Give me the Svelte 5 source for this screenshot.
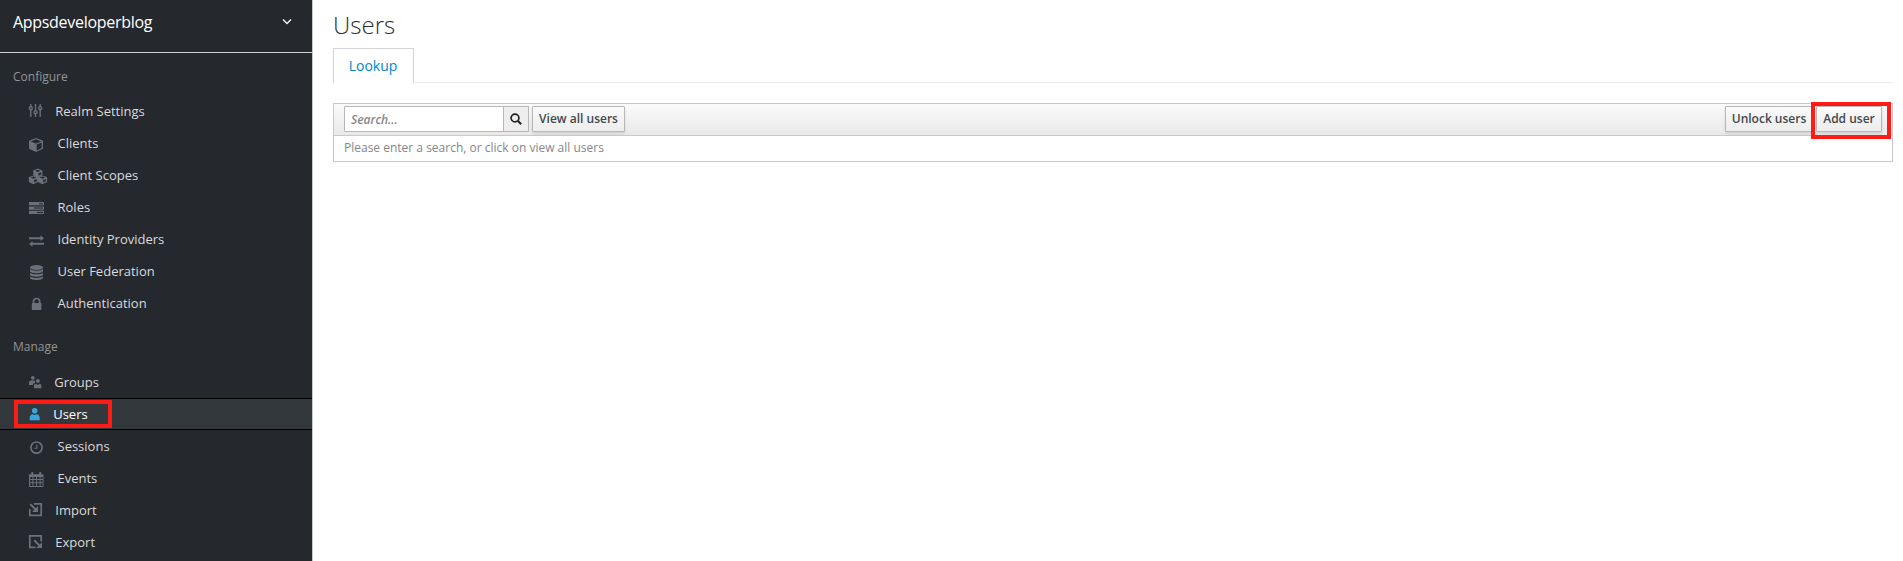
<script>
  const configure = [
    { label: 'Realm Settings', icon: 'sliders', offset: 55.3 },
    { label: 'Clients', icon: 'cube', offset: 57.5 },
    { label: 'Client Scopes', icon: 'cubes', offset: 57.5 },
    { label: 'Roles', icon: 'tasks', offset: 57.5 },
    { label: 'Identity Providers', icon: 'exchange', offset: 57.5 },
    { label: 'User Federation', icon: 'database', offset: 57.5 },
    { label: 'Authentication', icon: 'lock', offset: 57.5 }
  ];
  const manage = [
    { label: 'Groups', icon: 'groups', offset: 54.2 },
    { label: 'Users', icon: 'user', offset: 53.2, active: true },
    { label: 'Sessions', icon: 'clock', offset: 57.5 },
    { label: 'Events', icon: 'calendar', offset: 57.5 },
    { label: 'Import', icon: 'import', offset: 55.3 },
    { label: 'Export', icon: 'export', offset: 55.3 }
  ];
</script>

{#snippet glyph(name)}
  <svg class="icon" width="20" height="20" viewBox="0 0 20 20" fill="currentColor" aria-hidden="true">
    {#if name === 'sliders'}
      <g fill="none" stroke="currentColor" stroke-width="1.4">
        <path d="M2.8 3v2.7M2.8 9v7M7.5 3v6.5M7.5 13v3M12.2 3v2.7M12.2 9v7" />
        <circle cx="2.8" cy="7.3" r="1.5" /><circle cx="7.5" cy="11.2" r="1.5" /><circle cx="12.2" cy="7.3" r="1.5" />
      </g>
    {:else if name === 'cube'}
      <path fill-rule="evenodd" d="M8 5l7 2.7v8L8 19l-7-3.3v-8zM8 6.3L2.8 8.4 8 10.4l5.2-2zM8.7 11.6v5.8l5-2.4V9.6z" />
    {:else if name === 'cubes'}
      {#each [[5.2, 3.6], [0.8, 10.4], [9.9, 10.4]] as [x, y]}
        <path transform="translate({x} {y})" fill-rule="evenodd" d="M4.6 0L9.2 1.9v4.8L4.6 8.9 0 6.7V1.9zM4.6 1.1L2 2.2 4.6 3.3 7.2 2.2zM5.3 4.7v2.4l2.6-1.2V3.6z" />
      {/each}
    {:else if name === 'tasks'}
      <path fill-rule="evenodd" d="M1 5h15v3.3H1zM11 6.2v1h4v-1zM1 9.4h15v3.3H1zM6 10.5v1h9v-1zM1 13.8h15v3.3H1zM9 14.9v1h6v-1z" />
    {:else if name === 'exchange'}
      <path d="M1 8.2h11.5V6.3L16 9.2l-3.5 2.7v-1.7H1zM16 13.8H4.5v-1.7L1 14.9l3.5 2.8v-1.9H16z" />
    {:else if name === 'database'}
      <ellipse cx="8.5" cy="6.5" rx="6.5" ry="2.4" />
      <path d="M2 8.1c2 2.2 11 2.2 13 0v1.8c0 3-13 3-13 0zM2 11.7c2 2.2 11 2.2 13 0v1.8c0 3-13 3-13 0zM2 15.3c2 2.2 11 2.2 13 0v1.4c0 3-13 3-13 0z" />
    {:else if name === 'lock'}
      <path d="M5.5 10.5V8.6a3.1 3.1 0 0 1 6.2 0v1.9" fill="none" stroke="currentColor" stroke-width="1.7" />
      <rect x="3.8" y="10" width="9.6" height="7" rx=".7" />
    {:else if name === 'groups'}
      <circle cx="4.8" cy="5.8" r="1.9" /><circle cx="9.9" cy="8.9" r="1.9" />
      <path d="M1 13V10.5Q1 8.8 3 8.6h3.5l1 1.4-.8 1.3H5.4L4.9 13zM5.9 16.2v-2.1q0-2.2 2-2.4l2 1.2 2-1.2q1.5.2 1.5 2.4v2.1z" />
    {:else if name === 'user'}
      <circle cx="6.7" cy="6.7" r="2.8" />
      <path d="M1.7 16.2v-2.1c0-2.5 1.3-3.5 3.1-3.8q1.9 1 3.8 0c1.8.3 3.1 1.3 3.1 3.8v2.1z" />
    {:else if name === 'clock'}
      <circle cx="8.5" cy="11.6" r="5.6" fill="none" stroke="currentColor" stroke-width="1.7" />
      <path d="M8.9 8.6v3.6H6.4" fill="none" stroke="currentColor" stroke-width="1.1" />
    {:else if name === 'calendar'}
      <path fill-rule="evenodd" d="M1 6.2h2.2V5q0-1 1.1-1t1.1 1v1.2h5.7V5q0-1 1.1-1t1.1 1v1.2h2.2V19H1zM2.2 9v2.1h2.2V9zM5.4 9v2.1h2.6V9zM9 9v2.1h2.6V9zM12.6 9v2.1h2V9zM2.2 12.1v2.2h2.2v-2.2zM5.4 12.1v2.2h2.6v-2.2zM9 12.1v2.2h2.6v-2.2zM12.6 12.1v2.2h2v-2.2zM2.2 15.3V18h2.2v-2.7zM5.4 15.3V18h2.6v-2.7zM9 15.3V18h2.6v-2.7zM12.6 15.3V18h2v-2.7z" />
    {:else if name === 'import'}
      <path d="M6 3.9h7.2v11.4H1.8V9" fill="none" stroke="currentColor" stroke-width="1.7" />
      <path d="M2.3 4.3l5 5" stroke="currentColor" stroke-width="2" /><path d="M10 6v6H4z" />
    {:else if name === 'export'}
      <path d="M7.5 15.3H1.8V3.9h11.4v5.6" fill="none" stroke="currentColor" stroke-width="1.7" />
      <path d="M6.2 8.3l5 5" stroke="currentColor" stroke-width="2" /><path d="M14 10.2V16H8.2z" />
    {/if}
  </svg>
{/snippet}

{#snippet menu(items)}
  <ul>
    {#each items as item}
      <li class:active={item.active}>
        <span class="lead" style="width: {item.offset - 28}px">{@render glyph(item.icon)}</span>
        <span class="label">{item.label}</span>
        {#if item.active}<i class="mark mark-nav"></i>{/if}
      </li>
    {/each}
  </ul>
{/snippet}

<div class="page">
  <aside>
    <div class="realm">
      <span>Appsdeveloperblog</span>
      <svg width="12" height="8" viewBox="0 0 12 8" fill="none" stroke="#f0f0f0" stroke-width="1.5"><path d="M2 1.5l4 4 4-4" /></svg>
    </div>
    <h2>Configure</h2>
    {@render menu(configure)}
    <h2 class="second">Manage</h2>
    {@render menu(manage)}
  </aside>

  <main>
    <h1>Users</h1>
    <nav><span class="tab">Lookup</span></nav>
    <section class="table">
      <div class="toolbar">
        <div class="search">
          <input type="text" placeholder="Search..." />
          <span class="go">
            <svg width="12" height="12" viewBox="0 0 12 12" fill="none" stroke="#222" stroke-width="1.7"><circle cx="5" cy="5" r="3.9" /><path d="M7.8 7.8l3.4 3.4" stroke-width="2" /></svg>
          </span>
        </div>
        <button class="view">View all users</button>
        <div class="actions">
          <button class="unlock">Unlock users</button>
          <button class="add">Add user</button>
          <i class="mark mark-add"></i>
        </div>
      </div>
      <div class="message">Please enter a search, or click on view all users</div>
    </section>
  </main>
</div>

<style>
  :global(body) { margin: 0; background: #fff; }
  * { box-sizing: border-box; }
  .page { display: flex; height: 561px; overflow: hidden; font-family: 'Open Sans', sans-serif; font-size: 13px; }
  aside { width: 313px; flex: none; background: #25282d; border-right: 1px solid #c8c9ca; color: #dbdbdb; }
  .realm { display: flex; align-items: center; justify-content: space-between; height: 53px; padding: 0 19px 8px 13px; border-bottom: 1px solid #d3d3d4; font-size: 16px; letter-spacing: -0.3px; color: #fff; }
  h2 { margin: 0; height: 42px; padding: 14px 0 0 13px; font-size: 12px; line-height: 20px; font-weight: 400; color: #929497; }
  h2.second { height: 47px; padding-top: 18px; }
  ul { margin: 0; padding: 0; list-style: none; }
  li { position: relative; display: flex; height: 32px; padding-left: 28px; line-height: 32px; }
  .lead { flex: none; padding-top: 6px; color: #6a7178; line-height: 0; }
  .icon { display: block; }
  .active { background: #33383c; border-top: 1px solid #000; border-bottom: 1px solid #000; line-height: 30px; color: #fff; }
  .active .lead { padding-top: 5px; color: #39a5dc; }
  .mark { position: absolute; border: 4px solid #ff1c17; pointer-events: none; }
  .mark-nav { left: 14px; top: 1px; width: 98px; height: 28px; }
  main { flex: 1; padding: 0 10px 0 20px; }
  h1 { margin: 0; height: 48px; padding-top: 9px; font-size: 24px; line-height: 32px; font-weight: 300; color: #292e34; }
  nav { display: flex; height: 35px; border-bottom: 1px solid #ececec; }
  .tab { height: 35px; width: 81px; padding-right: 1px; text-align: center; border: 1px solid #d5d5d5; border-bottom: 0; background: #fff; color: #0088ce; font-size: 14px; line-height: 34px; }
  .table { margin-top: 20px; border: 1px solid #c9c9c9; height: 59px; }
  .toolbar { display: flex; height: 32px; padding: 2px 10px 0; background: linear-gradient(#fafafa, #e9e9e9); border-bottom: 1px solid #c9c9c9; }
  .search { display: flex; height: 26px; width: 185px; }
  input { width: 160px; border: 1px solid #b7b7b7; border-radius: 1px 0 0 1px; padding: 1px 6px 0; font: italic 600 12px 'Open Sans', sans-serif; outline: 0; }
  input::placeholder { color: #888; opacity: 1; }
  .go { display: flex; align-items: center; justify-content: center; width: 26px; margin-left: -1px; border: 1px solid #b7b7b7; background: #eee; }
  button { height: 26px; padding: 0; border: 1px solid #b7b7b7; border-radius: 1px; background: linear-gradient(#fafafa, #ededed); box-shadow: 0 2px 3px rgba(3, 3, 3, .1); color: #43484e; font: 600 12px/24px 'Open Sans', sans-serif; white-space: nowrap; }
  .view { width: 93px; margin-left: 3px; }
  .actions { position: relative; display: flex; margin-left: auto; gap: 3px; }
  .unlock { width: 88px; }
  .add { width: 66px; }
  .mark-add { right: -9px; top: -4px; width: 80px; height: 37px; }
  .message { padding-left: 10px; font-size: 12px; line-height: 23px; color: #85878a; }
</style>
